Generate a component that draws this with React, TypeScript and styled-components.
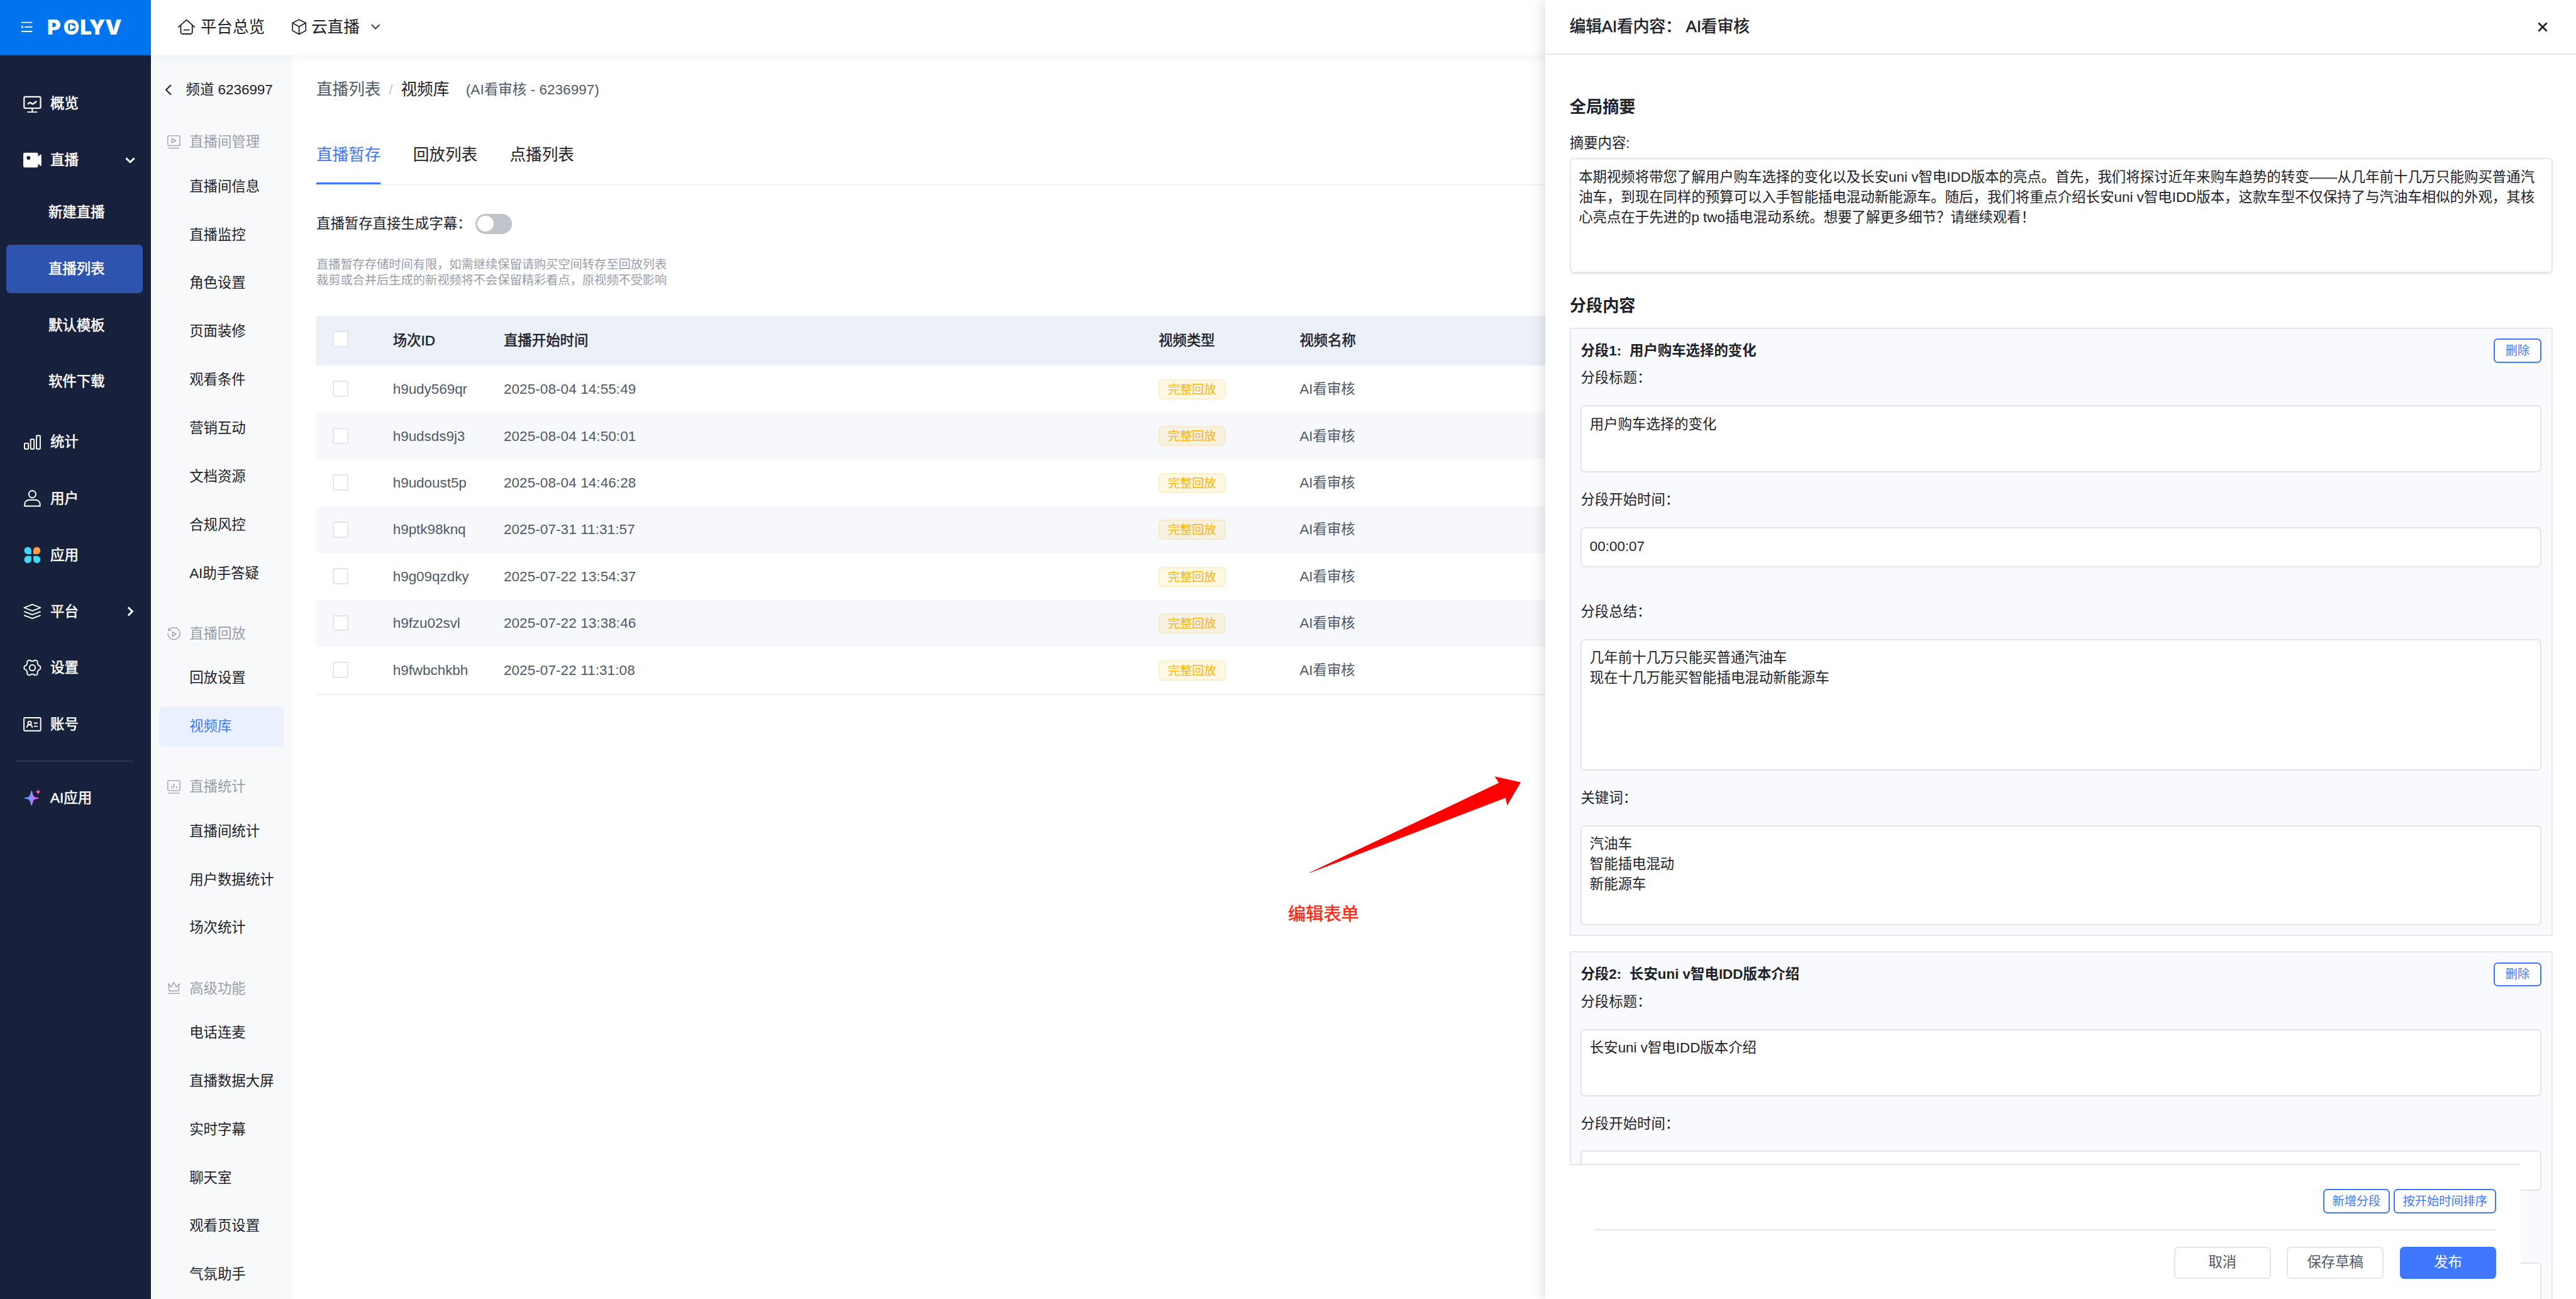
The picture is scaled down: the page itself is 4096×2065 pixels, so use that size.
import React from "react";
import styled, { createGlobalStyle, css } from "styled-components";

/* 1rem equals ten layout pixels of the 2557px wide console. */
const GlobalStyle = createGlobalStyle`
  html { font-size: 16.0188px; }
  body {
    margin: 0;
    background: #fff;
    overflow: hidden;
    font-family: "Liberation Sans", "Noto Sans CJK SC", sans-serif;
    color: #1d2129;
    text-spacing-trim: space-all;
  }
  *, *::before, *::after { box-sizing: border-box; }
  h1, h2, h3, p { margin: 0; }
  button, textarea, input { font-family: inherit; }
`;

/* Medium weight: the installed CJK family only has regular and bold. */
const medium = css`
  -webkit-text-stroke: 0.035rem currentColor;
`;

const Page = styled.div`
  position: relative;
  display: grid;
  grid-template-columns: 15rem 1fr;
  width: 100vw;
  height: 100vh;
  overflow: hidden;
  font-size: 1.4rem;
  line-height: 2.2rem;
`;

/* ---------- icons ---------- */

type DrawingProps = { w: number; h: number; children: React.ReactNode; sw?: number };

const DrawingSvg = styled.svg`
  display: block;
  flex: none;
  fill: none;
  stroke: currentColor;
  stroke-linejoin: round;
`;

/* Sizes are given in half layout pixels, the grid the icons were drawn on. */
const Drawing = ({ w, h, children, sw = 2.4 }: DrawingProps) => (
  <DrawingSvg width={`${w / 20}rem`} height={`${h / 20}rem`} viewBox={`0 0 ${w} ${h}`} strokeWidth={sw}>
    {children}
  </DrawingSvg>
);

const gearPath = (() => {
  const pts: string[] = [];
  for (let i = 0; i < 120; i++) {
    const a = (i / 120) * Math.PI * 2;
    const c = Math.cos(6 * a);
    const r = 14.6 + 1.7 * Math.tanh(c * 2);
    pts.push(`${(18 + r * Math.cos(a)).toFixed(2)} ${(18 + r * Math.sin(a)).toFixed(2)}`);
  }
  return `M${pts.join("L")}Z`;
})();

const icons = {
  overview: (
    <Drawing w={36} h={36} sw={2.7}>
      <rect x="1.6" y="3.6" width="32.8" height="22.6" rx="2.6" />
      <path d="M18 27v7M8 34.2h20" />
      <path d="M9 18.5c2.5-3.200 4.500-4.500 6.500-2.500s4 2.500 6 .3l5-3.800" strokeWidth="3" />
    </Drawing>
  ),
  live: (
    <Drawing w={36} h={36} sw={0}>
      <path
        fill="currentColor"
        fillRule="evenodd"
        d="M3 3.500h23.500a3 3 0 0 1 3 3v5l4.300-4.300c.8-.8 2.200-.3 2.200.8v20.400c0 1.200-1.400 1.700-2.200.9l-4.300-4.300v4.700a3 3 0 0 1-3 3H3a3 3 0 0 1-3-3V6.500a3 3 0 0 1 3-3zM10.400 10a3.800 3.800 0 1 0 0 7.600 3.800 3.800 0 0 0 0-7.600z"
      />
    </Drawing>
  ),
  stats: (
    <Drawing w={36} h={36}>
      <rect x="2.500" y="19.500" width="7.600" height="11.500" rx="1" />
      <rect x="14.600" y="11.500" width="6.800" height="19.500" rx="1" />
      <rect x="26.200" y="4.300" width="7.400" height="26.700" rx="1" />
    </Drawing>
  ),
  user: (
    <Drawing w={36} h={36}>
      <circle cx="18" cy="9.500" r="7" />
      <path d="M2.700 33v-3.500a8.500 8.500 0 0 1 8.500-8.500h13.600a8.500 8.500 0 0 1 8.500 8.500V33z" />
    </Drawing>
  ),
  apps: (
    <Drawing w={36} h={36} sw={0}>
      <path fill="#3fdaf5" d="M9 2a7 7 0 0 1 7 7v5.300a2 2 0 0 1-2 2H9A7 7 0 0 1 9 2z" />
      <path fill="#ff9d45" d="M27 2a7.100 7.100 0 0 1 0 14.300h-5a2 2 0 0 1-2-2V9a7 7 0 0 1 7-7z" />
      <path fill="#3fdaf5" d="M9 34a7.100 7.100 0 0 1 0-14.300h5a2 2 0 0 1 2 2V27a7 7 0 0 1-7 7z" />
      <path fill="#3fdaf5" d="M27 34a7 7 0 0 1-7-7v-5.300a2 2 0 0 1 2-2h5A7.100 7.100 0 0 1 27 34z" />
    </Drawing>
  ),
  platform: (
    <Drawing w={36} h={36} sw={2.3}>
      <path d="M18 3.700L34.300 10 18 16.300 1.700 10z" />
      <path d="M1.500 17.700L18 24l16.500-6.300M1.500 25.200L18 31.500l16.500-6.300" />
    </Drawing>
  ),
  settings: (
    <Drawing w={36} h={36} sw={2.4}>
      <path d={gearPath} />
      <circle cx="18" cy="18" r="5.800" />
    </Drawing>
  ),
  account: (
    <Drawing w={36} h={36} sw={2.4}>
      <rect x="1.400" y="5" width="33.200" height="26" rx="1.500" />
      <circle cx="12.500" cy="15.200" r="3.200" />
      <path d="M7 24.500c.3-3.500 2.500-5.500 5.500-5.500s5.200 2 5.500 5.500M21 15.700h7.500M21 22h7.500" />
    </Drawing>
  ),
  ai: (
    <Drawing w={36} h={36} sw={0}>
      <defs>
        <linearGradient id="spark" x1="0" y1="0" x2="1" y2="0">
          <stop offset="0" stopColor="#2fb4ff" />
          <stop offset="0.5" stopColor="#9b86ff" />
          <stop offset="1" stopColor="#ff4be6" />
        </linearGradient>
      </defs>
      <path fill="url(#spark)" d="M16.500 3.500c1.600 0 2 10.500 6 12.300 3.500 1.500 8.500.9 8.500 2.700s-5 1.200-8.500 2.700c-4 1.800-4.400 12.300-6 12.300s-2-10.500-6-12.300c-3.500-1.500-8.500-.9-8.500-2.700s5-1.200 8.500-2.700c4-1.800 4.400-12.300 6-12.300z" />
      <path fill="#ff62b4" d="M29.500.5c.8 3.200 2 4.500 5.200 5.400-3.200.9-4.400 2.200-5.200 5.400-.8-3.200-2-4.500-5.200-5.400 3.200-.9 4.400-2.200 5.200-5.400z" />
    </Drawing>
  ),
  chevronDown: (
    <Drawing w={20} h={20} sw={3.6}>
      <path d="M1.800 5.500L10 13.500l8.200-8" strokeLinejoin="miter" />
    </Drawing>
  ),
  chevronRight: (
    <Drawing w={20} h={20} sw={3.6}>
      <path d="M6 1.800L14.200 10 6 18.200" strokeLinejoin="miter" />
    </Drawing>
  ),
  thinDown: (
    <Drawing w={18} h={12} sw={2.1}>
      <path d="M1 1.500l8 8 8-8" />
    </Drawing>
  ),
  back: (
    <Drawing w={14} h={22} sw={2.6}>
      <path d="M12.500 1.200L2.500 11l10 9.800" />
    </Drawing>
  ),
  collapse: (
    <Drawing w={24} h={22} sw={2.3}>
      <path d="M1 2h22M7.500 11H23M1 20h22" />
      <path d="M0 11l4.500-3.300v6.600z" fill="currentColor" stroke="none" />
    </Drawing>
  ),
  home: (
    <Drawing w={34} h={32} sw={2.3}>
      <path d="M1.200 16L15.500 3.200a2.200 2.200 0 0 1 3 0L32.800 16" strokeLinecap="round" />
      <path d="M5.600 13.500V26.500a3.500 3.500 0 0 0 3.500 3.500h15.800a3.500 3.500 0 0 0 3.500-3.500V13.500M11 22h12" />
    </Drawing>
  ),
  cube: (
    <Drawing w={29} h={32} sw={2.1}>
      <path d="M14.500 1.500L27.700 8v15.500L14.500 30.500 1.300 23.500V8zM1.300 8l13.200 7.300L27.700 8M14.500 15.300v15.200" />
    </Drawing>
  ),
  room: (
    <Drawing w={26} h={27} sw={1.7}>
      <rect x="1" y="1" width="24" height="19.500" rx="2.500" />
      <path d="M9 6.500l8 4.300-8 4.300zM1 25.500h23" />
    </Drawing>
  ),
  replay: (
    <Drawing w={26} h={27} sw={1.7}>
      <path d="M3.500 5.500A12 12 0 1 1 1.200 12.500M2.300 1.500v5h5" />
      <path d="M10.500 9l7 4.500-7 4.500z" />
    </Drawing>
  ),
  chart: (
    <Drawing w={26} h={27} sw={1.7}>
      <rect x="1" y="1" width="24" height="20" rx="2.500" />
      <path d="M8.500 11v6M13 7.500V17M18.500 12.500V17M1.500 26h23" />
    </Drawing>
  ),
  crown: (
    <Drawing w={26} h={27} sw={1.7}>
      <path d="M2 4.500l2 14.500h18l2-14.500-6 7-5-10-5 10z" />
      <path d="M1 24h24" />
    </Drawing>
  ),
  close: (
    <Drawing w={20} h={20} sw={3.4}>
      <path d="M1.800 1.800l16.400 16.400M18.200 1.800L1.800 18.200" />
    </Drawing>
  ),
};

type IconName = keyof typeof icons;

/* ---------- primary navigation ---------- */

const Nav = styled.nav`
  display: flex;
  flex-direction: column;
  background: #17213b;
  color: #fff;
  z-index: 3;
`;

const Brand = styled.div`
  display: flex;
  align-items: center;
  gap: 1.55rem;
  height: 5.5rem;
  padding: 0 0 0.1rem 2.05rem;
  background: #0073ef;
`;

const BrandMark = styled.svg`
  width: 7.2rem;
  height: 1.5rem;
  overflow: visible;
  fill: #fff;

  text {
    font: 900 20.5px Inter, "Liberation Sans", sans-serif;
  }
`;

const NavList = styled.div`
  ${medium}
  display: flex;
  flex-direction: column;
  gap: 0.8rem;
  padding-top: 2.4rem;
`;

const NavGroup = styled.div`
  display: flex;
  flex-direction: column;
  gap: 0.4rem;
`;

const NavRow = styled.div`
  display: flex;
  align-items: center;
  gap: 0.9rem;
  height: 4.8rem;
  padding: 0 1.6rem 0 2.3rem;
`;

const NavArrow = styled.span`
  margin-left: auto;
`;

const SubList = styled.div`
  display: flex;
  flex-direction: column;
  gap: 0.8rem;
  padding: 0 0.8rem 0.4rem 0.6rem;
`;

const SubRow = styled.div<{ $active?: boolean }>`
  display: flex;
  align-items: center;
  height: 4.8rem;
  padding-left: 4.2rem;
  border-radius: 0.4rem;
  background: ${(p) => (p.$active ? "#2e54af" : "transparent")};
`;

const NavRule = styled.div`
  height: 0.1rem;
  margin: 0.4rem 1.75rem 0.4rem 1.55rem;
  background: #2f3850;
`;

/* ---------- top bar ---------- */

const Body = styled.div`
  display: grid;
  grid-template-rows: 5.5rem 1fr;
  min-width: 0;
  min-height: 0;
`;

const TopBar = styled.header`
  display: flex;
  align-items: center;
  gap: 2.65rem;
  padding: 0 0 0.1rem 2.65rem;
  background: #fff;
  box-shadow: 0 0.2rem 1rem rgba(0, 0, 0, 0.06);
  z-index: 2;
  font-size: 1.6rem;
`;

const TopLink = styled.div<{ $gap: number }>`
  display: flex;
  align-items: center;
  gap: ${(p) => p.$gap}rem;
`;

const TopCaret = styled.span`
  margin-left: 0.65rem;
`;

const Work = styled.div`
  display: grid;
  grid-template-columns: 14rem 1fr;
  min-height: 0;
`;

/* ---------- channel menu ---------- */

const Side = styled.aside`
  background: #f8f9fb;
  padding: 1.4rem 0.8rem 0;
  overflow: hidden;
`;

const Channel = styled.div`
  display: flex;
  align-items: center;
  gap: 1.4rem;
  height: 4rem;
  padding-left: 0.55rem;
  margin-bottom: 2.2rem;
`;

const SideGroup = styled.section`
  margin-bottom: 3rem;
`;

const SideHead = styled.div`
  display: flex;
  align-items: center;
  gap: 0.9rem;
  height: 2rem;
  margin-bottom: 1.4rem;
  padding-left: 0.8rem;
  color: #9a9eaa;
`;

const SideItems = styled.div`
  display: flex;
  flex-direction: column;
  gap: 0.8rem;
`;

const SideItem = styled.div<{ $active?: boolean }>`
  display: flex;
  align-items: center;
  height: 4rem;
  padding-left: 3rem;
  border-radius: 0.4rem;
  ${(p) =>
    p.$active &&
    css`
      background: #eaf0ff;
      color: #4077ff;
    `}
`;

/* ---------- main ---------- */

const Main = styled.main`
  padding: 2.3rem 0 0 2.4rem;
  min-width: 0;
`;

const Crumbs = styled.div`
  display: flex;
  align-items: center;
  height: 2.2rem;
  font-size: 1.6rem;
`;

const CrumbLink = styled.span`
  color: #4e5969;
`;

const CrumbSlash = styled.span`
  width: 2rem;
  text-align: center;
  color: #bfc4cd;
  font-size: 1.4rem;
`;

const CrumbNote = styled.span`
  margin-left: 1.65rem;
  color: #4e5969;
  font-size: 1.4rem;
  letter-spacing: 0.006rem;
`;

const Tabs = styled.div`
  display: flex;
  gap: 3.2rem;
  height: 5.3rem;
  margin-top: 3.1rem;
  border-bottom: 2px solid #f1f1f2;
  font-size: 1.6rem;
`;

const Tab = styled.div<{ $active?: boolean }>`
  height: 5.2rem;
  line-height: 4.6rem;
  ${(p) =>
    p.$active &&
    css`
      color: #4077ff;
      border-bottom: 3px solid #4077ff;
    `}
`;

const SwitchRow = styled.div`
  display: flex;
  align-items: center;
  gap: 0.4rem;
  height: 2.2rem;
  margin-top: 2.7rem;
`;

const Switch = styled.span`
  width: 3.6rem;
  height: 2rem;
  padding: 0.2rem;
  border-radius: 1rem;
  background: #bec3cc;

  &::before {
    content: "";
    display: block;
    width: 1.6rem;
    height: 1.6rem;
    border-radius: 50%;
    background: #fff;
  }
`;

const Notice = styled.p`
  margin-top: 2.15rem;
  font-size: 1.2rem;
  line-height: 1.6rem;
  color: #999dab;
  white-space: pre;
`;

const Table = styled.div`
  margin-top: 2.7rem;
  border-bottom: 2px solid #f1f1f2;
`;

const Row = styled.div<{ $head?: boolean; $stripe?: boolean }>`
  display: grid;
  grid-template-columns: 7.6rem 11rem 65rem 14rem 1fr;
  align-items: center;
  height: 4.65rem;
  color: #4e5969;
  background: ${(p) => (p.$stripe ? "#f6f8fc" : "#fff")};
  ${(p) =>
    p.$head &&
    css`
      ${medium}
      height: 4.95rem;
      color: #1d2129;
      background: #ecf0f8;
    `}
`;

const Time = styled.span`
  letter-spacing: 0.008rem;
`;

const Check = styled.span<{ $lift?: boolean }>`
  width: 1.6rem;
  height: 1.6rem;
  margin: 0 0 ${(p) => (p.$lift ? "0.35rem" : "0.05rem")} 1.6rem;
  border: 2px solid #e5e5e7;
  border-radius: 0.2rem;
  background: #fff;
`;

const Tag = styled.span`
  justify-self: start;
  padding: 0 0.8rem;
  height: 2rem;
  line-height: 1.9rem;
  border: 2px solid rgba(255, 182, 0, 0.12);
  border-radius: 0.4rem;
  background: rgba(255, 182, 0, 0.1);
  color: #ffb400;
  font-size: 1.2rem;
`;

/* ---------- annotation over the page ---------- */

const Pointer = styled.svg`
  position: absolute;
  left: 130rem;
  top: 76.99rem;
  width: 21.04rem;
  height: 9.7rem;
  z-index: 4;
`;

const PointerLabel = styled.div`
  ${medium}
  position: absolute;
  left: 127.85rem;
  top: 89.65rem;
  font-size: 1.76rem;
  line-height: 2.2rem;
  color: #ff2712;
  z-index: 4;
`;

/* ---------- drawer ---------- */

const Drawer = styled.section`
  position: absolute;
  top: 0;
  right: 0;
  bottom: 0;
  width: 102.3rem;
  display: flex;
  flex-direction: column;
  background: #fff;
  box-shadow: 0 0 1.4rem rgba(0, 0, 0, 0.18);
  z-index: 3;
`;

const DrawerHead = styled.header`
  ${medium}
  display: flex;
  flex: none;
  align-items: center;
  justify-content: space-between;
  height: 5.45rem;
  padding: 0 2.8rem 0 2.4rem;
  border-bottom: 2px solid #e7e7e8;
  font-size: 1.6rem;
`;

const DrawerBody = styled.div`
  flex: 1;
  min-height: 0;
  overflow: hidden;
  padding: 4.1rem 2.3rem 0 2.4rem;
`;

const SectionTitle = styled.h3`
  font-size: 1.638rem;
  line-height: 2.2rem;
  font-weight: 600;
`;

const SummaryLabel = styled.div`
  margin-top: 1.35rem;
`;

const SummaryWrap = styled.div`
  margin: 0.4rem 0 2.08rem;
  border-bottom: 2px solid #ececed;
`;

const Field = styled.div<{ $h: number }>`
  height: ${(p) => p.$h}rem;
  padding: 0.78rem 0.775rem;
  border: 2px solid #e5e5e6;
  border-radius: 0.4rem;
  background: #fff;
  line-height: 2rem;
  white-space: pre;
  overflow: hidden;
`;

const TimeField = styled(Field)`
  padding: 0.85rem 0.775rem;
`;

const Cards = styled.div`
  display: flex;
  flex-direction: column;
  gap: 1.5rem;
  margin-top: 1rem;
`;

const Card = styled.article`
  flex: none;
  height: 60.4rem;
  padding: 0.98rem;
  border: 2px solid #e8e8ea;
  background: #f9fafe;
`;

const CardHead = styled.div`
  display: flex;
  align-items: center;
  justify-content: space-between;
  height: 2.4rem;
`;

const CardTitle = styled.h3`
  display: flex;
  gap: 0.8rem;
  font-size: 1.4rem;
  font-weight: 700;
`;

const FieldLabel = styled.div<{ $top: number }>`
  margin: ${(p) => p.$top}rem 0 1.6rem;
  height: 2.2rem;
`;

const SmallButton = styled.button`
  height: 2.4rem;
  min-width: 4.8rem;
  padding: 0 0.775rem;
  border: 2px solid #4077ff;
  border-radius: 0.4rem;
  background: #fff;
  color: #4077ff;
  font-size: 1.2rem;
  line-height: 2.1rem;
  white-space: nowrap;
`;

const DrawerFoot = styled.footer`
  position: absolute;
  left: 2.4rem;
  right: 5.5rem;
  bottom: 0;
  height: 13.4rem;
  padding: 2.37rem 2.4rem 0;
  border-top: 2px solid #e5e5e6;
  background: #fff;
`;

const FootTools = styled.div`
  display: flex;
  justify-content: flex-end;
  gap: 0.4rem;
  padding-bottom: 1.6rem;
  border-bottom: 2px solid #e5e5e6;
`;

const FootActions = styled.div`
  display: flex;
  justify-content: flex-end;
  gap: 1.6rem;
  padding-top: 1.57rem;
`;

const ActionButton = styled.button<{ $primary?: boolean }>`
  width: 9.6rem;
  height: 3.2rem;
  padding: 0;
  border: 2px solid ${(p) => (p.$primary ? "#4077ff" : "#e5e5e6")};
  border-radius: 0.4rem;
  background: ${(p) => (p.$primary ? "#4077ff" : "#fff")};
  color: ${(p) => (p.$primary ? "#fff" : "#4e5969")};
  font-size: 1.4rem;
  line-height: 1;
`;

/* ---------- data ---------- */

const navTail: { icon: IconName; label: string; more?: boolean }[] = [
  { icon: "stats", label: "统计" },
  { icon: "user", label: "用户" },
  { icon: "apps", label: "应用" },
  { icon: "platform", label: "平台", more: true },
  { icon: "settings", label: "设置" },
  { icon: "account", label: "账号" },
];

const liveItems = ["新建直播", "直播列表", "默认模板", "软件下载"];

const sideGroups: { icon: IconName; title: string; items: string[] }[] = [
  {
    icon: "room",
    title: "直播间管理",
    items: ["直播间信息", "直播监控", "角色设置", "页面装修", "观看条件", "营销互动", "文档资源", "合规风控", "AI助手答疑"],
  },
  { icon: "replay", title: "直播回放", items: ["回放设置", "视频库"] },
  { icon: "chart", title: "直播统计", items: ["直播间统计", "用户数据统计", "场次统计"] },
  {
    icon: "crown",
    title: "高级功能",
    items: ["电话连麦", "直播数据大屏", "实时字幕", "聊天室", "观看页设置", "气氛助手"],
  },
];

const sessions = [
  ["h9udy569qr", "2025-08-04 14:55:49"],
  ["h9udsds9j3", "2025-08-04 14:50:01"],
  ["h9udoust5p", "2025-08-04 14:46:28"],
  ["h9ptk98knq", "2025-07-31 11:31:57"],
  ["h9g09qzdky", "2025-07-22 13:54:37"],
  ["h9fzu02svl", "2025-07-22 13:38:46"],
  ["h9fwbchkbh", "2025-07-22 11:31:08"],
];

const summary = [
  "本期视频将带您了解用户购车选择的变化以及长安uni v智电IDD版本的亮点。首先，我们将探讨近年来购车趋势的转变——从几年前十几万只能购买普通汽",
  "油车，到现在同样的预算可以入手智能插电混动新能源车。随后，我们将重点介绍长安uni v智电IDD版本，这款车型不仅保持了与汽油车相似的外观，其核",
  "心亮点在于先进的p two插电混动系统。想要了解更多细节？请继续观看！",
].join("\n");

const segments: { title: string; start?: string; points?: string; keywords?: string }[] = [
  {
    title: "用户购车选择的变化",
    start: "00:00:07",
    points: "几年前十几万只能买普通汽油车\n现在十几万能买智能插电混动新能源车",
    keywords: "汽油车\n智能插电混动\n新能源车",
  },
  { title: "长安uni v智电IDD版本介绍" },
];

export default function App() {
  return (
    <>
      <GlobalStyle />
      <Page>
        <Nav>
          <Brand>
            {icons.collapse}
            <BrandMark viewBox="0 0 72 15">
              <text x="-1.3 14.9 31.400 40.500 56.400" y="14.900">
                POLYV
              </text>
              <rect x="19.500" y="3.700" width="7.200" height="7.500" rx="2.200" fill="#0073ef" />
              <path d="M21.300 5.500c0-.7.6-1 1.200-.7l3.300 1.900c.6.400.6 1.100 0 1.500l-3.300 1.900c-.6.300-1.200 0-1.200-.7z" />
            </BrandMark>
          </Brand>
          <NavList>
            <NavRow>
              {icons.overview}
              概览
            </NavRow>
            <NavGroup>
              <NavRow>
                {icons.live}
                直播
                <NavArrow>{icons.chevronDown}</NavArrow>
              </NavRow>
              <SubList>
                {liveItems.map((label) => (
                  <SubRow key={label} $active={label === "直播列表"}>
                    {label}
                  </SubRow>
                ))}
              </SubList>
            </NavGroup>
            {navTail.map((item) => (
              <NavRow key={item.label}>
                {icons[item.icon]}
                {item.label}
                {item.more && <NavArrow>{icons.chevronRight}</NavArrow>}
              </NavRow>
            ))}
            <NavRule />
            <NavRow>
              {icons.ai}
              AI应用
            </NavRow>
          </NavList>
        </Nav>

        <Body>
          <TopBar>
            <TopLink $gap={0.55}>
              {icons.home}
              平台总览
            </TopLink>
            <TopLink $gap={0.5}>
              {icons.cube}
              云直播
              <TopCaret>{icons.thinDown}</TopCaret>
            </TopLink>
          </TopBar>

          <Work>
            <Side>
              <Channel>
                {icons.back}
                频道 6236997
              </Channel>
              {sideGroups.map((group) => (
                <SideGroup key={group.title}>
                  <SideHead>
                    {icons[group.icon]}
                    {group.title}
                  </SideHead>
                  <SideItems>
                    {group.items.map((label) => (
                      <SideItem key={label} $active={label === "视频库"}>
                        {label}
                      </SideItem>
                    ))}
                  </SideItems>
                </SideGroup>
              ))}
            </Side>

            <Main>
              <Crumbs>
                <CrumbLink>直播列表</CrumbLink>
                <CrumbSlash>/</CrumbSlash>
                <span>视频库</span>
                <CrumbNote>(AI看审核 - 6236997)</CrumbNote>
              </Crumbs>
              <Tabs>
                <Tab $active>直播暂存</Tab>
                <Tab>回放列表</Tab>
                <Tab>点播列表</Tab>
              </Tabs>
              <SwitchRow>
                <span>直播暂存直接生成字幕：</span>
                <Switch />
              </SwitchRow>
              <Notice>
                {"直播暂存存储时间有限，如需继续保留请购买空间转存至回放列表\n裁剪或合并后生成的新视频将不会保留精彩看点，原视频不受影响"}
              </Notice>
              <Table>
                <Row $head>
                  <Check $lift />
                  <span>场次ID</span>
                  <span>直播开始时间</span>
                  <span>视频类型</span>
                  <span>视频名称</span>
                </Row>
                {sessions.map(([id, time], i) => (
                  <Row key={id} $stripe={i % 2 === 1}>
                    <Check />
                    <span>{id}</span>
                    <Time>{time}</Time>
                    <Tag>完整回放</Tag>
                    <span>AI看审核</span>
                  </Row>
                ))}
              </Table>
            </Main>
          </Work>
        </Body>

        <Drawer>
          <DrawerHead>
            <span>编辑AI看内容： AI看审核</span>
            {icons.close}
          </DrawerHead>
          <DrawerBody>
            <SectionTitle>全局摘要</SectionTitle>
            <SummaryLabel>摘要内容:</SummaryLabel>
            <SummaryWrap>
              <Field $h={11.4}>{summary}</Field>
            </SummaryWrap>
            <SectionTitle>分段内容</SectionTitle>
            <Cards>
              {segments.map((seg, i) => (
                <Card key={seg.title}>
                  <CardHead>
                    <CardTitle>
                      <span>分段{i + 1}:</span>
                      <span>{seg.title}</span>
                    </CardTitle>
                    <SmallButton>删除</SmallButton>
                  </CardHead>
                  <FieldLabel $top={0.4}>分段标题：</FieldLabel>
                  <Field $h={6.7}>{seg.title}</Field>
                  <FieldLabel $top={1.6}>分段开始时间：</FieldLabel>
                  <TimeField $h={4}>{seg.start}</TimeField>
                  <FieldLabel $top={3.3}>{seg.points && "分段总结："}</FieldLabel>
                  <Field $h={13.1}>{seg.points}</Field>
                  {seg.keywords && (
                    <>
                      <FieldLabel $top={1.6}>关键词：</FieldLabel>
                      <Field $h={9.9}>{seg.keywords}</Field>
                    </>
                  )}
                </Card>
              ))}
            </Cards>
          </DrawerBody>
          <DrawerFoot>
            <FootTools>
              <SmallButton>新增分段</SmallButton>
              <SmallButton>按开始时间排序</SmallButton>
            </FootTools>
            <FootActions>
              <ActionButton>取消</ActionButton>
              <ActionButton>保存草稿</ActionButton>
              <ActionButton $primary>发布</ActionButton>
            </FootActions>
          </DrawerFoot>
        </Drawer>

        <Pointer viewBox="118 58 612 282">
          <path d="M118 338L665 79 653 60 728.500 77 689 144 684.500 122 120 338.500z" fill="#ff0000" />
        </Pointer>
        <PointerLabel>编辑表单</PointerLabel>
      </Page>
    </>
  );
}
